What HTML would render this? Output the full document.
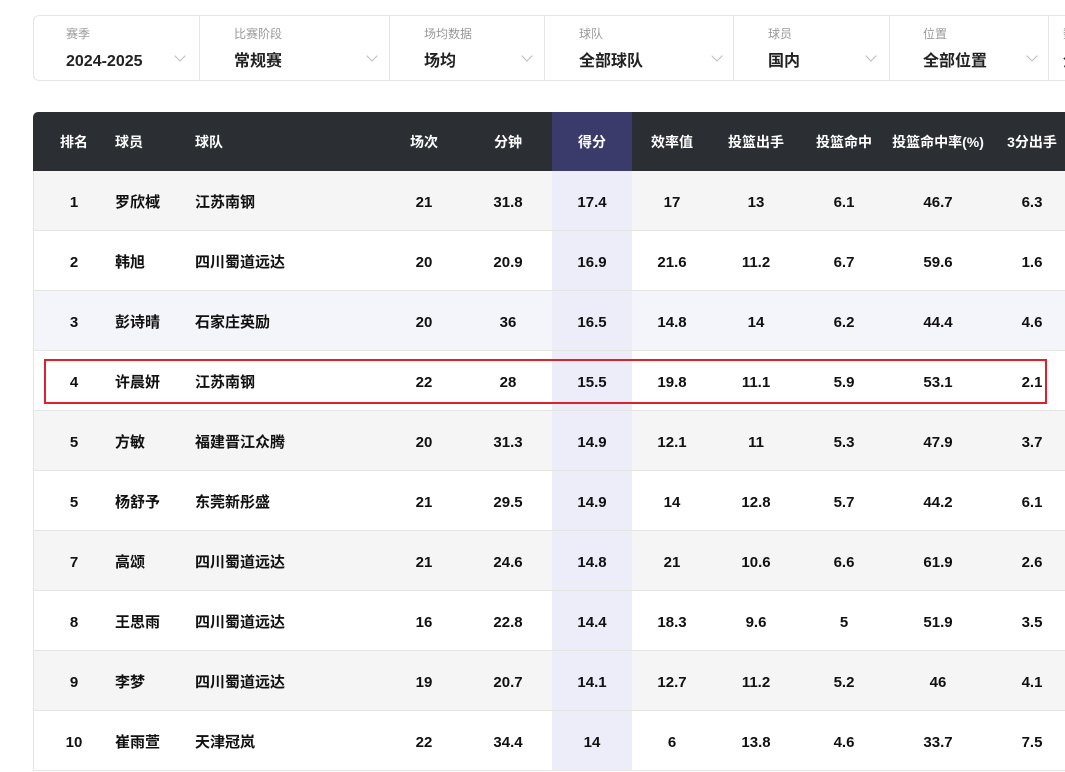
<!DOCTYPE html>
<html><head><meta charset="utf-8"><style>
*{margin:0;padding:0;box-sizing:border-box}
body{width:1065px;height:767px;overflow:hidden;background:#fff;font-family:"Liberation Sans","Noto Sans CJK SC",sans-serif;position:relative}
.filt{position:absolute;left:33px;top:15px;width:1100px;height:66px;border:1px solid #e6e6e6;border-radius:6px}
.f{position:absolute;top:0;height:64px;border-left:1px solid #e6e6e6}
.f .l{position:absolute;top:10px;line-height:16px;font-size:12px;color:#999}
.f .v{position:absolute;top:36px;line-height:20px;font-size:16px;color:#222;font-weight:bold}
.chev{position:absolute;top:36px;width:8px;height:8px;border-right:1px solid #bbb;border-bottom:1px solid #bbb;transform:rotate(45deg)}
.tbl{position:absolute;left:33px;top:112px;width:1100px}
.hd{height:59px;background:#2b2f33;border-radius:5px 0 0 0;position:relative;color:#fff;font-weight:bold;font-size:14px}
.row{height:60px;position:relative;border-bottom:1px solid #e4e4e4;border-left:1px solid #e4e4e4;font-weight:bold;font-size:15px;color:#111}
.c{position:absolute;top:2px;line-height:59px;white-space:nowrap}
.hd .c{top:1px}
.ctr{transform:translateX(-50%)}
.sc{position:absolute;left:519px;width:80px;top:0;bottom:0}
.row .sc{left:518px}
</style></head><body>
<div class="filt">
 <div class="f" style="left:-1px;border:none;width:166px"><span class="l" style="left:33px">赛季</span><span class="v" style="left:33px">2024-2025</span><i class="chev" style="left:143px"></i></div>
 <div class="f" style="left:165px;width:190px"><span class="l" style="left:34px">比赛阶段</span><span class="v" style="left:34px">常规赛</span><i class="chev" style="left:168px"></i></div>
 <div class="f" style="left:355px;width:155px"><span class="l" style="left:34px">场均数据</span><span class="v" style="left:34px">场均</span><i class="chev" style="left:133px"></i></div>
 <div class="f" style="left:510px;width:189px"><span class="l" style="left:34px">球队</span><span class="v" style="left:34px">全部球队</span><i class="chev" style="left:168px"></i></div>
 <div class="f" style="left:699px;width:155px"><span class="l" style="left:34px">球员</span><span class="v" style="left:34px">国内</span><i class="chev" style="left:133px"></i></div>
 <div class="f" style="left:855px;width:159px"><span class="l" style="left:33px">位置</span><span class="v" style="left:33px">全部位置</span><i class="chev" style="left:138px"></i></div>
 <div class="f" style="left:1014px;width:100px"><span class="l" style="left:14px">数据</span><span class="v" style="left:14px">全部</span></div>
</div>
<div class="tbl">
 <div class="hd"><div class="sc" style="background:#3a3a6b"></div>
  <span class="c ctr" style="left:41px">排名</span><span class="c" style="left:82px">球员</span><span class="c" style="left:162px">球队</span>
  <span class="c ctr" style="left:391px">场次</span><span class="c ctr" style="left:475px">分钟</span><span class="c ctr" style="left:559px">得分</span>
  <span class="c ctr" style="left:639px">效率值</span><span class="c ctr" style="left:723px">投篮出手</span><span class="c ctr" style="left:811px">投篮命中</span>
  <span class="c ctr" style="left:905px">投篮命中率(%)</span><span class="c ctr" style="left:999px">3分出手</span></div>
 <div id="rows"></div>
</div>
<div style="position:absolute;left:44px;top:359px;width:1003px;height:45px;border:2px solid #e0202a"></div>
<script>
var d=[["1","罗欣棫","江苏南钢","21","31.8","17.4","17","13","6.1","46.7","6.3"],
["2","韩旭","四川蜀道远达","20","20.9","16.9","21.6","11.2","6.7","59.6","1.6"],
["3","彭诗晴","石家庄英励","20","36","16.5","14.8","14","6.2","44.4","4.6"],
["4","许晨妍","江苏南钢","22","28","15.5","19.8","11.1","5.9","53.1","2.1"],
["5","方敏","福建晋江众腾","20","31.3","14.9","12.1","11","5.3","47.9","3.7"],
["5","杨舒予","东莞新彤盛","21","29.5","14.9","14","12.8","5.7","44.2","6.1"],
["7","高颂","四川蜀道远达","21","24.6","14.8","21","10.6","6.6","61.9","2.6"],
["8","王思雨","四川蜀道远达","16","22.8","14.4","18.3","9.6","5","51.9","3.5"],
["9","李梦","四川蜀道远达","19","20.7","14.1","12.7","11.2","5.2","46","4.1"],
["10","崔雨萱","天津冠岚","22","34.4","14","6","13.8","4.6","33.7","7.5"]];
var bg=["#f5f5f5","#fff","#f4f4fb","#fff","#f5f5f5","#fff","#f5f5f5","#fff","#f5f5f5","#fff"];
var x=[40,81,161,390,474,558,638,722,810,904,998],h="";
d.forEach(function(r,i){h+='<div class="row" style="background:'+bg[i]+'"><div class="sc" style="background:#ededfa"></div>';
r.forEach(function(v,j){h+='<span class="c'+((j==1||j==2)?'':' ctr')+'" style="left:'+x[j]+'px">'+v+'</span>'});h+='</div>'});
document.getElementById('rows').innerHTML=h;
</script>
</body></html>
